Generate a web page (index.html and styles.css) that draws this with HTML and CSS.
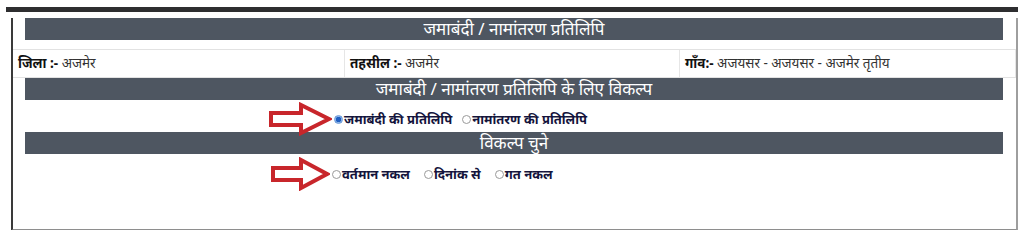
FILE: index.html
```html
<!DOCTYPE html>
<html>
<head>
  <meta charset="utf-8">
  <link rel="stylesheet" href="styles.css">
</head>
<body>
  <div class="page">
    <div class="box">
      <div class="bar first">जमाबंदी / नामांतरण प्रतिलिपि</div>

      <div class="info">
        <div class="cell"><b>जिला :-</b> अजमेर</div>
        <div class="cell"><b>तहसील :-</b> अजमेर</div>
        <div class="cell"><b>गाँव:-</b> अजयसर - अजयसर - अजमेर तृतीय</div>
      </div>

      <div class="bar">जमाबंदी / नामांतरण प्रतिलिपि के लिए विकल्प</div>
      <div class="choices one">
        <svg class="arrow" width="64" height="34" viewBox="0 0 64 34">
          <path d="M3 11 H33 V3 L61 17 L33 31 V23 H3 Z" fill="#fff" stroke="#c8262b" stroke-width="4" stroke-linejoin="miter"/>
        </svg>
        <label><span class="radio on"></span>जमाबंदी की प्रतिलिपि</label>
        <label><span class="radio"></span>नामांतरण की प्रतिलिपि</label>
      </div>

      <div class="bar">विकल्प चुने</div>
      <div class="choices two">
        <svg class="arrow" width="60" height="34" viewBox="0 0 60 34">
          <path d="M3 11 H31 V3 L57 17 L31 31 V23 H3 Z" fill="#fff" stroke="#c8262b" stroke-width="4" stroke-linejoin="miter"/>
        </svg>
        <label><span class="radio"></span>वर्तमान नकल</label>
        <label><span class="radio"></span>दिनांक से</label>
        <label><span class="radio"></span>गत नकल</label>
      </div>
    </div>
  </div>
</body>
</html>
```

FILE: styles.css
```css
body {
  margin: 0;
  background: #fff;
  font-family: "Noto Sans", "DejaVu Sans", sans-serif;
}

.page {
  margin: 7px 6px 0 6px;
  width: 1012px;
  border-top: 5px solid #2e2e30;
}

.box {
  margin-left: 5px;
  width: 1003px;
  height: 211px;
  border-left: 2px solid #3a3a3a;
  border-right: 2px solid #9e9e9e;
  border-bottom: 2px solid #8e8e8e;
}

.bar {
  margin: 0 13px 0 12px;
  height: 22px;
  background: #4e5661;
  color: #fff;
  text-align: center;
  font-size: 17px;
  line-height: 22px;
  overflow: hidden;
}

.bar.first {
  margin-top: 6px;
}

.info {
  display: grid;
  grid-template-columns: 332px 335px 336px;
  margin-top: 9px;
  border-top: 1px solid #e2e2e2;
  border-bottom: 1px solid #e2e2e2;
  height: 27px;
}

.cell {
  padding-left: 5px;
  font-size: 13.5px;
  line-height: 27px;
  color: #333;
  border-right: 1px solid #e6e6e6;
}

.cell b {
  color: #111;
}

.choices {
  display: flex;
  align-items: center;
  box-sizing: border-box;
  font-size: 13px;
  font-weight: bold;
  color: #14143c;
}

.choices.one {
  height: 32px;
  padding-top: 6px;
  padding-left: 255px;
}

.choices.two {
  height: 40px;
  padding-left: 257px;
}

.choices.two label {
  margin-right: 14px;
}

.arrow {
  display: block;
  margin-right: 2px;
}

label {
  display: flex;
  align-items: center;
  margin-right: 10px;
}

.radio {
  width: 9px;
  height: 9px;
  border: 1px solid #9a9a9a;
  border-radius: 50%;
  background: #fff;
  margin-right: 1px;
  box-sizing: border-box;
}

.radio.on {
  border-color: #6a9ad8;
  background: radial-gradient(circle, #1f5fc2 0 2.5px, #8fb6ea 3px);
}
```
